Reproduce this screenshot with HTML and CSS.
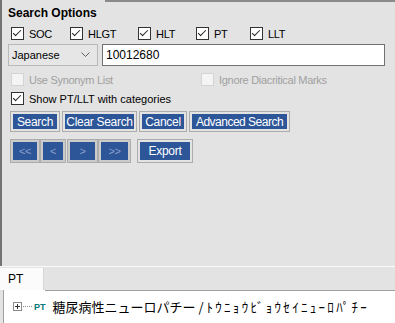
FILE: index.html
```html
<!DOCTYPE html>
<html lang="en">

<head>
    <meta charset="UTF-8">
    <title>Search Options</title>
    <link rel="stylesheet" href="styles.css">
</head>

<body>

    <div class="options">
        <div class="head">
            <span class="title">Search Options</span>
            <span class="rule"></span>
        </div>

        <div class="row types">
            <label class="check w-soc"><span class="box on"></span>SOC</label>
            <label class="check w-hlgt"><span class="box on"></span>HLGT</label>
            <label class="check w-hlt"><span class="box on"></span>HLT</label>
            <label class="check w-pt"><span class="box on"></span>PT</label>
            <label class="check"><span class="box on"></span>LLT</label>
        </div>

        <div class="row query">
            <div class="combo">
                <span>Japanese</span>
                <svg class="chev" width="9" height="6" viewBox="0 0 9 6">
                    <polyline points="0.5,0.5 4.5,4.5 8.5,0.5" fill="none" stroke="#606060" stroke-width="1" />
                </svg>
            </div>
            <div class="field">10012680</div>
        </div>

        <div class="row opt1">
            <label class="check off w-syn"><span class="box"></span>Use Synonym List</label>
            <label class="check off"><span class="box"></span>Ignore Diacritical Marks</label>
        </div>

        <div class="row opt2">
            <label class="check wide"><span class="box on"></span>Show PT/LLT with categories</label>
        </div>

        <div class="row actions">
            <span class="btn w-search">Search</span>
            <span class="btn w-clear">Clear Search</span>
            <span class="btn w-cancel">Cancel</span>
            <span class="btn w-adv">Advanced Search</span>
        </div>

        <div class="row nav">
            <span class="btn pager w-first">&lt;&lt;</span>
            <span class="btn pager w-prev">&lt;</span>
            <span class="btn pager w-next">&gt;</span>
            <span class="btn pager w-last">&gt;&gt;</span>
            <span class="btn w-export">Export</span>
        </div>
    </div>

    <div class="tabs">
        <span class="tab">PT</span>
    </div>

    <div class="panel">
        <div class="node">
            <svg class="expander" width="9" height="9" viewBox="0 0 9 9">
                <rect x="0.5" y="0.5" width="8" height="8" fill="#fff" stroke="#8c8c8c" />
                <line x1="2" y1="4.5" x2="7" y2="4.5" stroke="#333" />
                <line x1="4.5" y1="2" x2="4.5" y2="7" stroke="#333" />
            </svg>
            <span class="dots"></span>
            <span class="tag">PT</span>
            <span class="term">糖尿病性ニューロパチー / <span class="kana">ﾄｳﾆｮｳﾋﾞｮｳｾｲﾆｭｰﾛﾊﾟﾁｰ</span></span>
        </div>
    </div>

</body>

</html>
```

FILE: styles.css
```css
html {
    font-family: "Liberation Sans", Arial, sans-serif;
}

body {
    width: 395px;
    height: 323px;
    margin: 0;
    overflow: hidden;
    background-color: #e3e3e3;
    color: #000;
}

.options {
    height: 266px;
    box-sizing: border-box;
    border-left: 2px solid #737373;
    padding-left: 6px;
}

.head {
    display: flex;
    height: 22px;
}

.title {
    padding-top: 5px;
    line-height: 16px;
    font-size: 12px;
    font-weight: bold;
}

.rule {
    flex: 1;
    align-self: flex-start;
    margin-left: 8px;
    border-top: 2px solid #8a8a8a;
}

.row {
    display: flex;
    align-items: center;
}

.check {
    display: flex;
    align-items: center;
    gap: 5px;
    font-size: 11px;
    letter-spacing: -0.3px;
}

.check.wide {
    letter-spacing: 0;
}

.box {
    width: 11px;
    height: 11px;
    border: 1px solid #333;
    background: #fff;
    position: relative;
}

.box.on::after {
    content: "";
    position: absolute;
    left: 3px;
    top: 0px;
    width: 3px;
    height: 7px;
    border-right: 1px solid #222;
    border-bottom: 1px solid #222;
    transform: rotate(45deg);
}

.check.off {
    color: #a0a0a0;
}

.check.off .box {
    border-color: #d4d4d4;
    background: #f4f4f4;
}

.types {
    margin-top: 5px;
    height: 13px;
    padding-left: 3px;
}

.w-soc { width: 59px; }
.w-hlgt { width: 68px; }
.w-hlt { width: 58px; }
.w-pt { width: 54px; }
.w-syn { width: 190px; }

.query {
    margin-top: 4px;
    height: 22px;
    gap: 4px;
}

.combo {
    width: 90px;
    height: 22px;
    box-sizing: border-box;
    border: 1px solid #b9b9b9;
    background: #e6e6e6;
    display: flex;
    align-items: center;
    justify-content: space-between;
    padding: 0 7px 0 3px;
    font-size: 11px;
}

.field {
    width: 283px;
    height: 22px;
    box-sizing: border-box;
    border: 1px solid #717171;
    background: #fff;
    padding-left: 3px;
    line-height: 20px;
    font-size: 12px;
}

.opt1 {
    margin-top: 7px;
    height: 13px;
    padding-left: 3px;
}

.opt2 {
    margin-top: 6px;
    height: 13px;
    padding-left: 3px;
}

.actions {
    margin-top: 6px;
    height: 21px;
    padding-left: 2px;
    gap: 2px;
}

.btn {
    height: 100%;
    box-sizing: border-box;
    display: flex;
    align-items: center;
    justify-content: center;
    border: 1px solid #acacac;
    box-shadow: inset 0 0 0 2px #e3e3e3;
    background-color: #2d5699;
    color: #fff;
    font-size: 12px;
    letter-spacing: -0.3px;
}

.w-search { width: 50px; }
.w-clear { width: 75px; }
.w-cancel { width: 48px; }
.w-adv { width: 101px; letter-spacing: -0.5px; }

.nav {
    margin-top: 7px;
    height: 24px;
    padding-left: 2px;
}

.pager {
    color: #8a9fcb;
    box-shadow: inset 0 0 0 2px #cbcbcb;
    font-size: 11px;
}

.w-first { width: 30px; }
.w-prev { width: 26px; }
.w-next { width: 31px; margin-left: 1px; }
.w-last { width: 33px; }
.w-export { width: 56px; margin-left: 6px; }

.tabs {
    height: 24px;
    border-top: 1px solid #fafafa;
    box-sizing: border-box;
    display: flex;
    align-items: flex-end;
}

.tab {
    width: 44px;
    height: 22px;
    box-sizing: border-box;
    background: #fbfbfb;
    border-right: 1px solid #d6d6d6;
    padding-left: 8px;
    line-height: 22px;
    font-size: 12px;
}

.panel {
    height: 33px;
    margin-left: 3px;
    background: #fff;
    border-left: 1px solid #a0a0a0;
    box-sizing: border-box;
    position: relative;
}

.panel::before {
    content: "";
    position: absolute;
    left: 41px;
    right: 0;
    top: 0;
    border-top: 1px solid #a0a0a0;
}

.node {
    display: flex;
    align-items: center;
    padding: 7px 0 0 9px;
}

.dots {
    width: 9px;
    margin: 0 2px 0 1px;
    border-top: 1px dotted #909090;
}

.tag {
    color: #0b7a7a;
    font-size: 9px;
    font-weight: bold;
    margin-right: 7px;
}

.term {
    font-family: "Noto Sans CJK JP", sans-serif;
    font-size: 13px;
    white-space: nowrap;
}

.kana {
    letter-spacing: 2.3px;
}
```
